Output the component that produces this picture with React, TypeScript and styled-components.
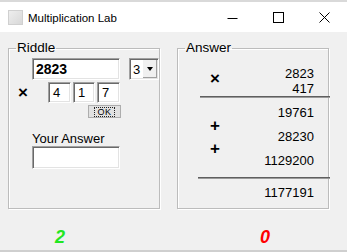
import React from "react";
import styled, { createGlobalStyle } from "styled-components";

const Global = createGlobalStyle`
  html, body { margin: 0; padding: 0; background: #f0f0f0; }
  body { font-family: "Liberation Sans", Arial, sans-serif; }
`;

const Window = styled.div`
  width: 347px;
  height: 252px;
  box-sizing: border-box;
  background: #f0f0f0;
  border-bottom: 2px solid #cfcfcf;
  display: flex;
  flex-direction: column;
  overflow: hidden;
`;

const TitleBar = styled.div`
  height: 32px;
  box-sizing: border-box;
  background: #ffffff;
  border-top: 2px solid #d9d9d9;
  display: flex;
  align-items: center;
  padding-left: 8px;
`;

const AppIcon = styled.div`
  width: 15px;
  height: 15px;
  box-sizing: border-box;
  background: linear-gradient(135deg, #eeeeee, #d8d8d8);
  border: 1px solid #d0d0d0;
  margin-top: 1px;
`;

const Title = styled.div`
  margin-left: 5px;
  font-size: 11.5px;
  color: #000;
  flex: 1;
  margin-top: 1px;
`;

const CtlButton = styled.div`
  width: 46px;
  height: 30px;
  display: flex;
  align-items: center;
  justify-content: center;
`;

const Client = styled.div`
  flex: 1;
  display: flex;
  flex-direction: column;
`;

const Groups = styled.div`
  display: flex;
  gap: 17px;
  padding-left: 8px;
  margin-top: 9px;
`;

const Group = styled.fieldset`
  margin: 0;
  padding: 0;
  width: 152px;
  height: 168px;
  box-sizing: border-box;
  border: 1px solid #bcbcbc;
  box-shadow: inset 1px 1px 0 #ffffff, 1px 1px 0 #ffffff;
  min-width: 0;
`;

const Legend = styled.legend`
  margin-left: 7px;
  padding: 0 1px;
  font-size: 13.5px;
  line-height: 14px;
  color: #000;
`;

const Row = styled.div<{ $top: number; $left?: number }>`
  display: flex;
  align-items: center;
  margin-top: ${(p) => p.$top}px;
  margin-left: ${(p) => p.$left ?? 0}px;
`;

const Field = styled.div<{ $w: number; $h: number; $bold?: boolean }>`
  width: ${(p) => p.$w}px;
  height: ${(p) => p.$h}px;
  box-sizing: border-box;
  background: #ffffff;
  border-top: 1px solid #a0a0a0;
  border-left: 1px solid #a0a0a0;
  border-right: 1px solid #ffffff;
  border-bottom: 1px solid #ffffff;
  box-shadow: inset 1px 1px 0 #696969, inset -1px -1px 0 #e3e3e3;
  padding-left: ${(p) => (p.$bold ? 3 : 4)}px;
  display: flex;
  align-items: center;
  font-size: ${(p) => (p.$bold ? 14 : 13)}px;
  font-weight: ${(p) => (p.$bold ? 700 : 400)};
  color: #000;
`;

const Combo = styled.div`
  margin-left: 9px;
  width: 30px;
  height: 22px;
  box-sizing: border-box;
  background: #fff;
  border-top: 1px solid #a0a0a0;
  border-left: 1px solid #a0a0a0;
  border-right: 1px solid #fff;
  border-bottom: 1px solid #fff;
  box-shadow: inset 1px 1px 0 #696969, inset -1px -1px 0 #e3e3e3;
  display: flex;
  align-items: stretch;
`;

const ComboText = styled.div`
  flex: 1;
  font-size: 13px;
  padding-left: 3px;
  display: flex;
  align-items: center;
`;

const ComboArrow = styled.div`
  width: 14px;
  margin: 1px 1px 1px 0;
  background: #f0f0f0;
  border-left: 1px solid #fff;
  box-shadow: inset -1px -1px 0 #a0a0a0;
  display: flex;
  align-items: center;
  justify-content: center;
`;

const Triangle = styled.div`
  width: 0;
  height: 0;
  border-left: 3.5px solid transparent;
  border-right: 3.5px solid transparent;
  border-top: 4px solid #000;
`;

const Times = styled.div`
  width: 39px;
  padding-left: 9px;
  box-sizing: border-box;
  font-size: 17px;
  font-weight: 700;
  line-height: 14px;
`;

const Digits = styled.div`
  display: flex;
  gap: 2px;
`;

const SmallButton = styled.div`
  width: 33px;
  height: 13px;
  box-sizing: border-box;
  background: #e1e1e1;
  border: 1px solid #adadad;
  display: flex;
  align-items: center;
  justify-content: center;
`;

const Focus = styled.div`
  outline: 1px dotted #222;
  font-size: 9px;
  line-height: 8px;
  padding: 0 2px;
  letter-spacing: 0.5px;
`;

const Label = styled.div`
  margin-top: 13px;
  margin-left: 23px;
  font-size: 13px;
  line-height: 15px;
  color: #000;
`;

const Work = styled.div<{ $top: number }>`
  display: grid;
  grid-template-columns: 74px 1fr;
  margin-top: ${(p) => p.$top}px;
  padding-right: 14px;
`;

const Ops = styled.div<{ $pad: number; $lh: number }>`
  display: flex;
  flex-direction: column;
  align-items: center;
  padding-top: ${(p) => p.$pad}px;
  font-size: 17px;
  font-weight: 700;
  line-height: ${(p) => p.$lh}px;
`;

const Nums = styled.div<{ $lh: number }>`
  display: flex;
  flex-direction: column;
  align-items: flex-end;
  font-size: 13px;
  line-height: ${(p) => p.$lh}px;
  color: #000;
`;

const Rule = styled.div<{ $left: number; $top: number }>`
  margin-left: ${(p) => p.$left}px;
  margin-right: -2px;
  margin-top: ${(p) => p.$top}px;
  height: 0;
  border-top: 1px solid #5f5f5f;
  border-bottom: 1px solid #9a9a9a;
`;

const Footer = styled.div`
  display: flex;
  margin-top: 18px;
  padding-left: 55px;
  gap: 195px;
`;

const Score = styled.div<{ $color: string }>`
  font-size: 18px;
  line-height: 20px;
  font-weight: 700;
  font-style: italic;
  color: ${(p) => p.$color};
`;

export default function App() {
  return (
    <>
      <Global />
      <Window>
        <TitleBar>
          <AppIcon />
          <Title>Multiplication Lab</Title>
          <CtlButton>
            <svg width="11" height="11" viewBox="0 0 11 11">
              <line x1="0.5" y1="6.5" x2="10.5" y2="6.5" stroke="#000" strokeWidth="1" />
            </svg>
          </CtlButton>
          <CtlButton>
            <svg width="11" height="11" viewBox="0 0 11 11">
              <rect x="0.5" y="0.5" width="10" height="10" fill="none" stroke="#000" strokeWidth="1" />
            </svg>
          </CtlButton>
          <CtlButton>
            <svg width="11" height="11" viewBox="0 0 11 11">
              <path d="M0.5 0.5 L10.5 10.5 M10.5 0.5 L0.5 10.5" stroke="#000" strokeWidth="1" />
            </svg>
          </CtlButton>
        </TitleBar>
        <Client>
          <Groups>
            <Group>
              <Legend>Riddle</Legend>
              <Row $top={3} $left={23}>
                <Field $w={88} $h={22} $bold>2823</Field>
                <Combo>
                  <ComboText>3</ComboText>
                  <ComboArrow>
                    <Triangle />
                  </ComboArrow>
                </Combo>
              </Row>
              <Row $top={2}>
                <Times>×</Times>
                <Digits>
                  <Field $w={23} $h={21}>4</Field>
                  <Field $w={22} $h={21}>1</Field>
                  <Field $w={23} $h={21}>7</Field>
                </Digits>
              </Row>
              <Row $top={2} $left={79}>
                <SmallButton>
                  <Focus>OK</Focus>
                </SmallButton>
              </Row>
              <Label>Your Answer</Label>
              <Row $top={0} $left={23}>
                <Field $w={88} $h={23} />
              </Row>
            </Group>
            <Group>
              <Legend>Answer</Legend>
              <Work $top={11}>
                <Ops $pad={5} $lh={15}>×</Ops>
                <Nums $lh={15}>
                  <div>2823</div>
                  <div>417</div>
                </Nums>
              </Work>
              <Rule $left={22} $top={0} />
              <Work $top={3}>
                <Ops $pad={13} $lh={23}>
                  <div>+</div>
                  <div>+</div>
                </Ops>
                <Nums $lh={24}>
                  <div>19761</div>
                  <div>28230</div>
                  <div>1129200</div>
                </Nums>
              </Work>
              <Rule $left={20} $top={4} />
              <Work $top={2}>
                <div />
                <Nums $lh={24}>
                  <div>1177191</div>
                </Nums>
              </Work>
            </Group>
          </Groups>
          <Footer>
            <Score $color="#22e622">2</Score>
            <Score $color="#ff0000">0</Score>
          </Footer>
        </Client>
      </Window>
    </>
  );
}
